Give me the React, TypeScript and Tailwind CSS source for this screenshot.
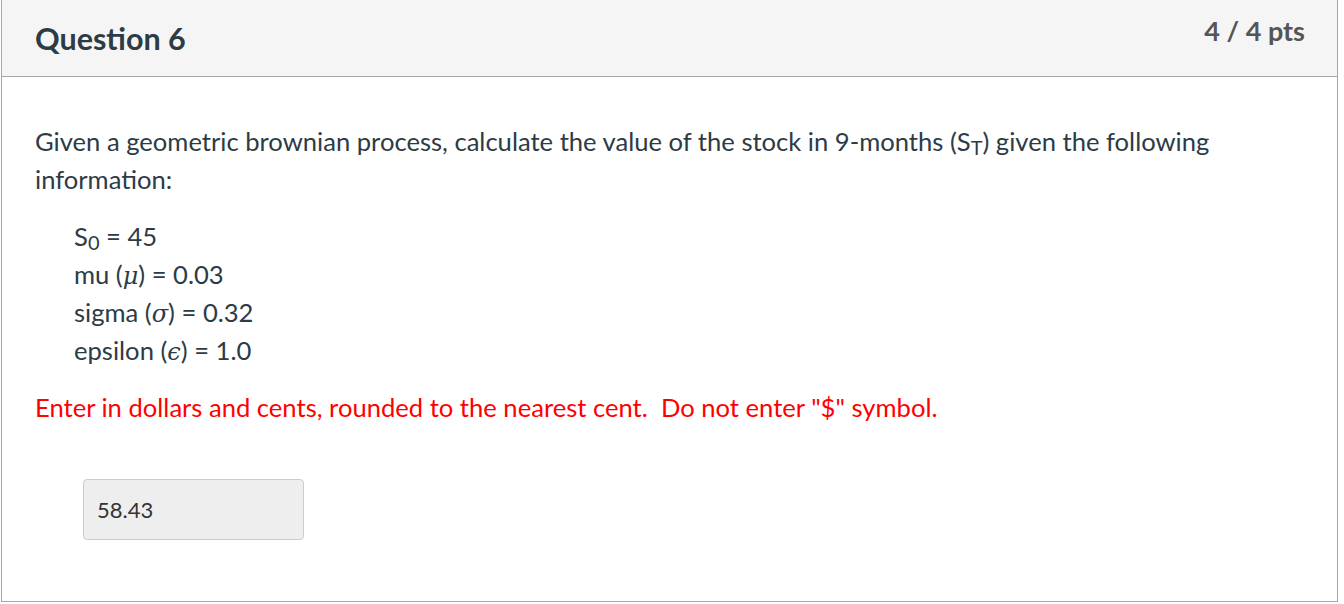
export default function App() {
  return (
    <div className="h-[604px] w-[1344px] bg-white font-['Lato','Liberation_Sans',sans-serif] text-[#2d3b45]">
      <div className="ml-[1px] flex h-[602px] w-[1337px] flex-col border border-t-0 border-[#a8a8a8]">
        <div className="flex h-[77px] shrink-0 items-start justify-between border-b border-[#a8a8a8] bg-[#f5f5f5] pl-[33px] pr-[32px]">
          <h2 className="mt-[20px] text-[30.5px] font-bold leading-[36px]">Question 6</h2>
          <div className="mt-[14px] text-[27px] font-bold leading-[34px] text-[#555]">4 / 4 pts</div>
        </div>
        <div className="pl-[33px] pr-[80px] pt-[45px] text-[25.6px] leading-[38px]">
          <p className="max-w-[1200px]">
            Given a geometric brownian process, calculate the value of the stock in 9-months (S
            <sub className="relative top-[4px] align-baseline text-[20px] leading-none">T</sub>) given the following
            information:
          </p>
          <div className="mt-[19px] pl-[39px]">
            <div className="h-[38px]">
              S<sub className="relative top-[4px] align-baseline text-[20px] leading-none">0</sub> = 45
            </div>
            <div className="h-[38px]">
              mu (<span className="font-['DejaVu_Serif',serif] text-[24px] italic leading-none">μ</span>) = 0.03
            </div>
            <div className="h-[38px]">
              sigma (<span className="font-['DejaVu_Serif',serif] text-[24px] italic leading-none">σ</span>) = 0.32
            </div>
            <div className="h-[38px]">
              epsilon (<span className="font-['DejaVu_Serif',serif] text-[24px] italic leading-none">ϵ</span>) = 1.0
            </div>
          </div>
          <p className="mt-[19px] text-[#ff0000]">
            Enter in dollars and cents, rounded to the nearest cent.&nbsp; Do not enter "$" symbol.
          </p>
          <div className="mt-[53px] pl-[48px]">
            <div className="flex h-[61px] w-[221px] items-center rounded-[4px] border border-[#cccccc] bg-[#eeeeee] pl-[13px] text-[22px] text-[#333]">
              58.43
            </div>
          </div>
        </div>
      </div>
    </div>
  )
}
